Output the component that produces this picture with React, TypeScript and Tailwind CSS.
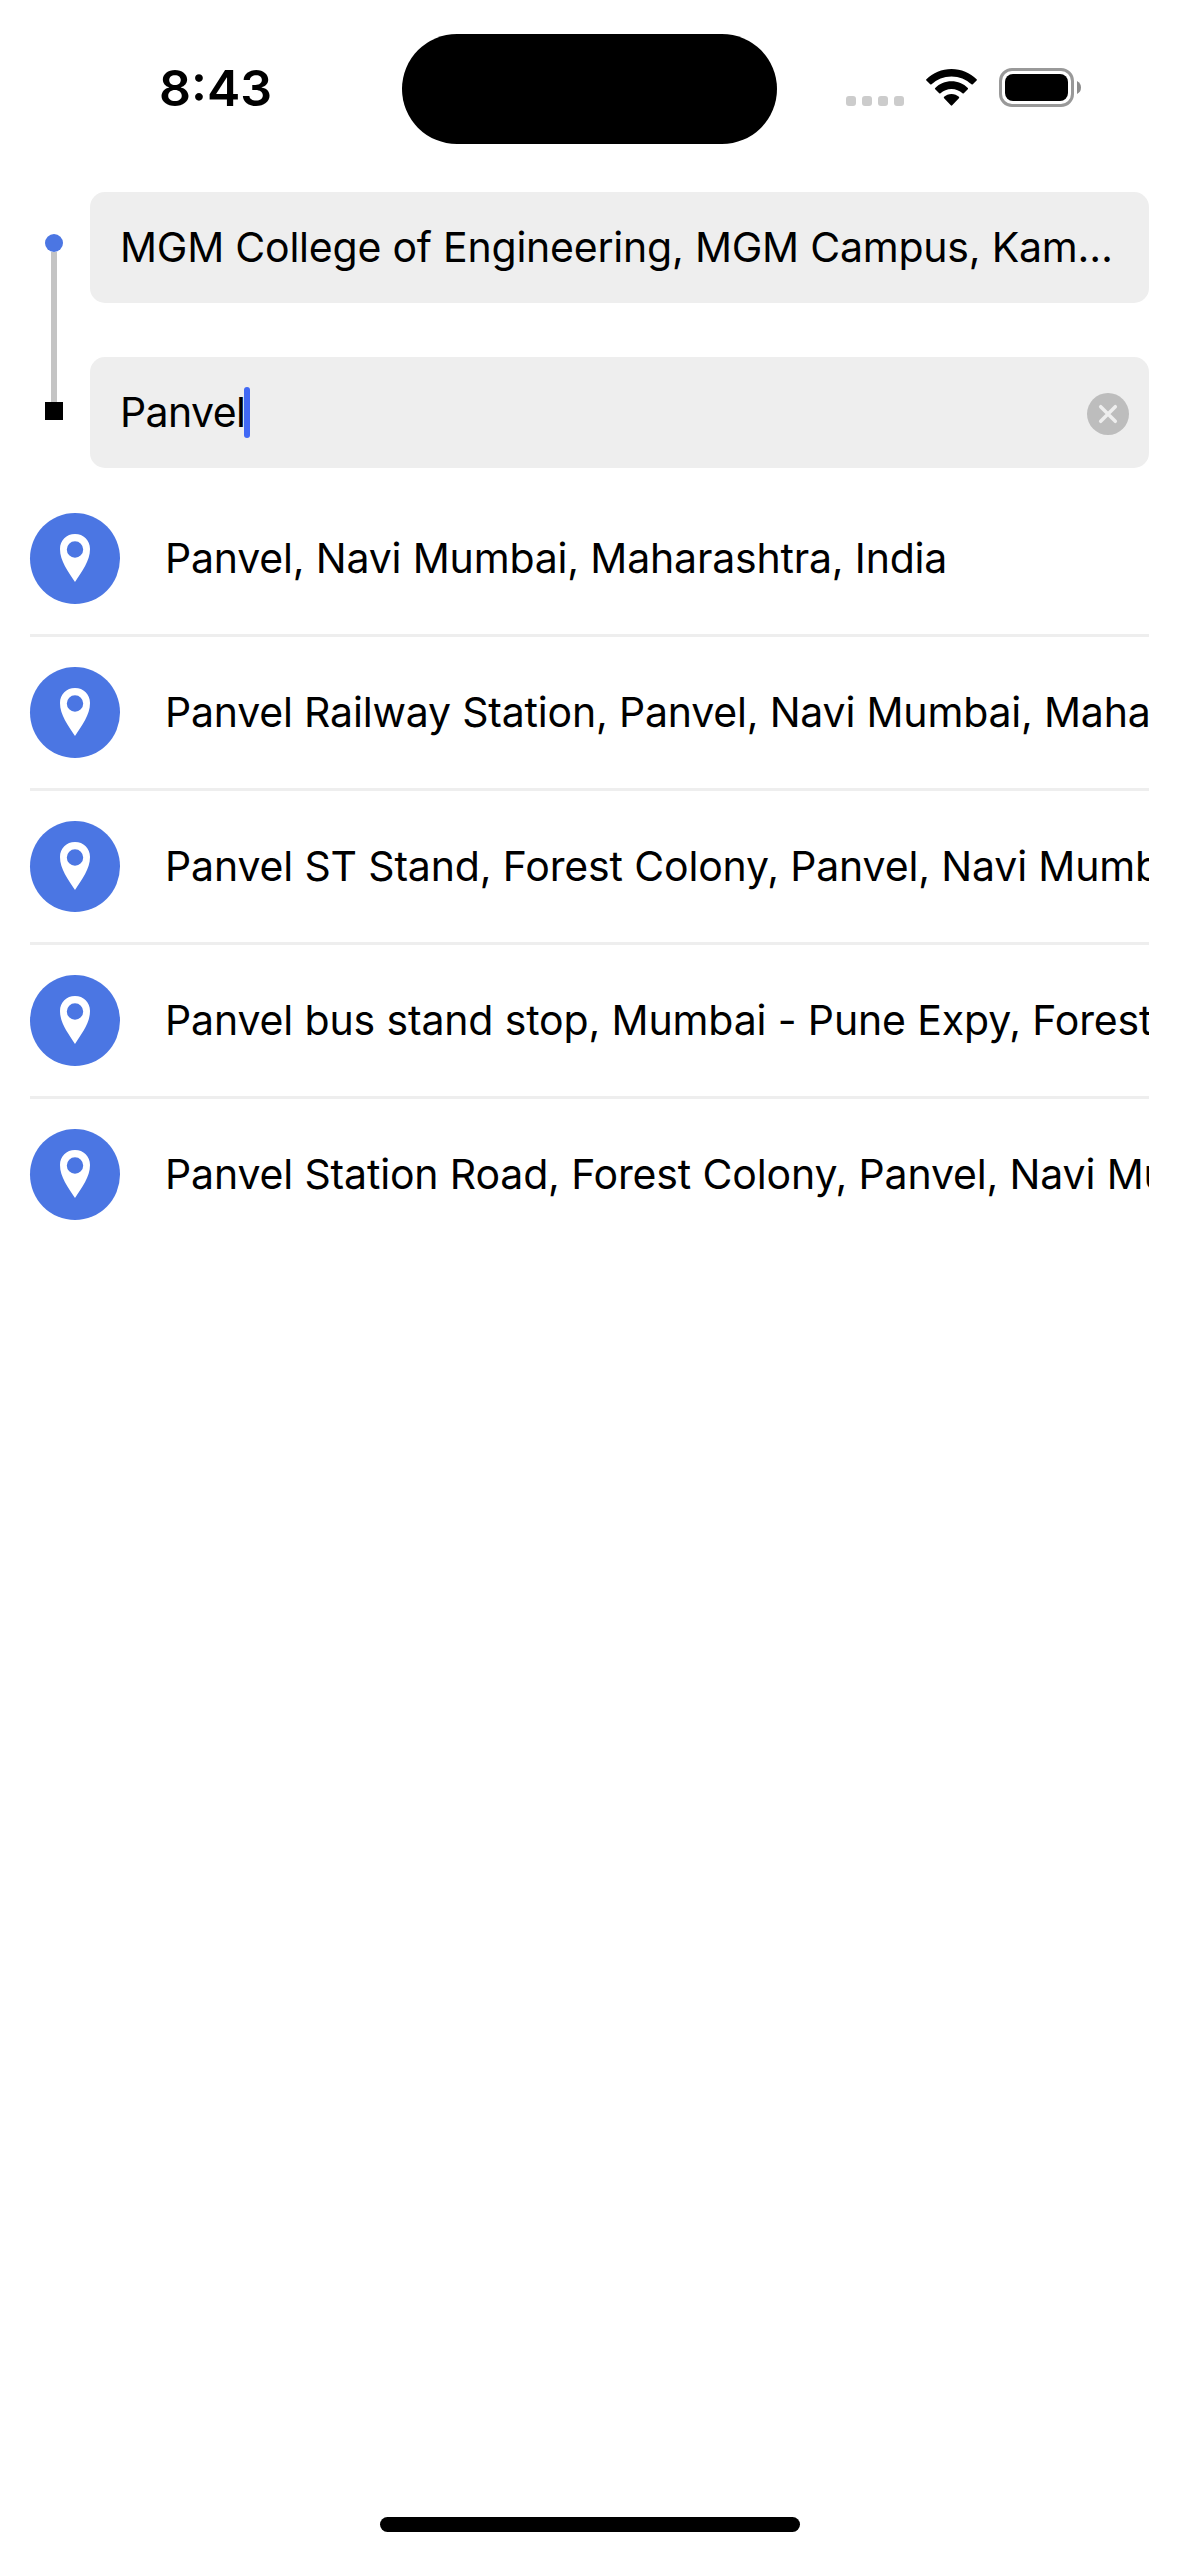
import React from "react";

const places = [
  { name: "Panvel, Navi Mumbai, Maharashtra, India", tracking: "tracking-[-0.18px]" },
  { name: "Panvel Railway Station, Panvel, Navi Mumbai, Maharashtra, India", tracking: "tracking-[-0.19px]" },
  { name: "Panvel ST Stand, Forest Colony, Panvel, Navi Mumbai, Maharashtra", tracking: "tracking-[-0.15px]" },
  { name: "Panvel bus stand stop, Mumbai - Pune Expy, Forest Colony, Panvel", tracking: "tracking-[-0.14px]" },
  { name: "Panvel Station Road, Forest Colony, Panvel, Navi Mumbai, India", tracking: "tracking-[-0.15px]" },
];

function StatusBar() {
  return (
    <header className="flex h-[192px] shrink-0 items-start">
      <div className="w-[402px] pt-[58px] pl-[159px] text-[50px] leading-[60px] font-semibold">
        8:43
      </div>
      <div className="mt-[34px] h-[110px] w-[375px] rounded-full bg-black" />
      <div className="mt-[68px] ml-[69px] flex h-[40px] items-start">
        <div className="mt-[28px] flex gap-[6px]">
          <span className="size-[10px] rounded-[3px] bg-[#cccccc]" />
          <span className="size-[10px] rounded-[3px] bg-[#cccccc]" />
          <span className="size-[10px] rounded-[3px] bg-[#cccccc]" />
          <span className="size-[10px] rounded-[3px] bg-[#cccccc]" />
        </div>
        <svg className="mt-px ml-[22px]" width="51" height="38" viewBox="0 0 51 38">
          <path d="M25.5 0C35.2 0 44.1 3.9 50.6 10.2Q51.2 10.9 50.6 11.5L46.8 15.3Q46.1 15.9 45.5 15.3C40.2 10.4 33.2 7.4 25.5 7.4S10.8 10.4 5.5 15.3Q4.9 15.9 4.2 15.3L.4 11.5Q-.2 10.9 .4 10.2C6.9 3.9 15.8 0 25.5 0Z" />
          <path d="M25.5 12.3C31.8 12.3 37.5 14.8 41.8 18.9Q42.5 19.6 41.8 20.2L37.8 24.2Q37.1 24.9 36.5 24.3C33.6 21.6 29.7 20 25.5 20S17.4 21.6 14.5 24.3Q13.9 24.9 13.2 24.2L9.2 20.2Q8.5 19.6 9.2 18.9C13.5 14.8 19.2 12.3 25.5 12.3Z" />
          <path d="M25.5 24.9C28.4 24.9 31 26 32.9 27.8Q33.6 28.5 32.9 29.2L26.2 36.3Q25.5 37 24.8 36.3L18.1 29.2Q17.4 28.5 18.1 27.8C20 26 22.6 24.9 25.5 24.9Z" />
        </svg>
        <div className="ml-[22px] h-[39px] w-[75px] rounded-[13px] border-[3px] border-[#999999] p-[3px]">
          <div className="h-full rounded-[8px] bg-black" />
        </div>
        <svg className="mt-[13px] ml-[3px]" width="4" height="13" viewBox="0 0 4 13">
          <path d="M0 0Q4 2 4 6.5T0 13Z" fill="#8c8c8c" />
        </svg>
      </div>
    </header>
  );
}

function RouteMarkers() {
  return (
    <div className="flex w-[18px] flex-col items-center pt-[42px]">
      <span className="size-[18px] rounded-full bg-[#4b76e3]" />
      <span className="h-[150px] w-[6px] bg-[#c4c4c4]" />
      <span className="size-[18px] bg-black" />
    </div>
  );
}

function PinBadge() {
  return (
    <div className="flex h-[91px] w-[90px] shrink-0 justify-center rounded-[50%] bg-[#4b76e3] pt-[21px]">
      <svg width="30" height="48" viewBox="0 0 30 48">
        <path
          fill="white"
          fillRule="evenodd"
          d="M15 0C23.5 0 30 6.3 30 15C30 27 22 37 15 48C8 37 0 27 0 15C0 6.3 6.5 0 15 0ZM15 7.3A8.2 8.2 0 1 0 15 23.7A8.2 8.2 0 1 0 15 7.3Z"
        />
      </svg>
    </div>
  );
}

export default function App() {
  return (
    <div className="flex h-[2556px] w-[1179px] flex-col overflow-hidden bg-white font-['Inter',sans-serif] text-black">
      <StatusBar />
      <section className="flex gap-[27px] pr-[30px] pl-[45px] text-[41px] tracking-[-0.22px]">
        <RouteMarkers />
        <div className="flex min-w-0 flex-1 flex-col gap-[54px]">
          <div className="flex h-[111px] items-center rounded-[15px] bg-[#eeeeee] pl-[30px] whitespace-nowrap">
            MGM College of Engineering, MGM Campus, Kam…
          </div>
          <div className="flex h-[111px] items-center rounded-[15px] bg-[#eeeeee] pr-5 pl-[30px]">
            <span className="tracking-[-0.6px]">Panvel</span>
            <span className="-ml-px h-[51px] w-[6px] rounded-full bg-[#4169f5]" />
            <svg className="mt-[3px] ml-auto" width="42" height="42" viewBox="0 0 42 42">
              <circle cx="21" cy="21" r="21" fill="#bdbdbd" />
              <path d="M13.7 13.7L28.3 28.3M28.3 13.7L13.7 28.3" stroke="#eeeeee" strokeWidth="3.5" strokeLinecap="round" />
            </svg>
          </div>
        </div>
      </section>
      <ul className="mt-[15px] mr-[30px] ml-[30px] text-[41px]">
        {places.map((place) => (
          <li key={place.name} className="flex h-[154px] items-center gap-[45px] border-b-[3px] border-[#eeeeee] last:border-transparent">
            <PinBadge />
            <span className={`min-w-0 flex-1 overflow-hidden whitespace-nowrap ${place.tracking}`}>{place.name}</span>
          </li>
        ))}
      </ul>
      <footer className="mt-auto mb-6 h-[15px] w-[420px] self-center rounded-full bg-black" />
    </div>
  );
}
